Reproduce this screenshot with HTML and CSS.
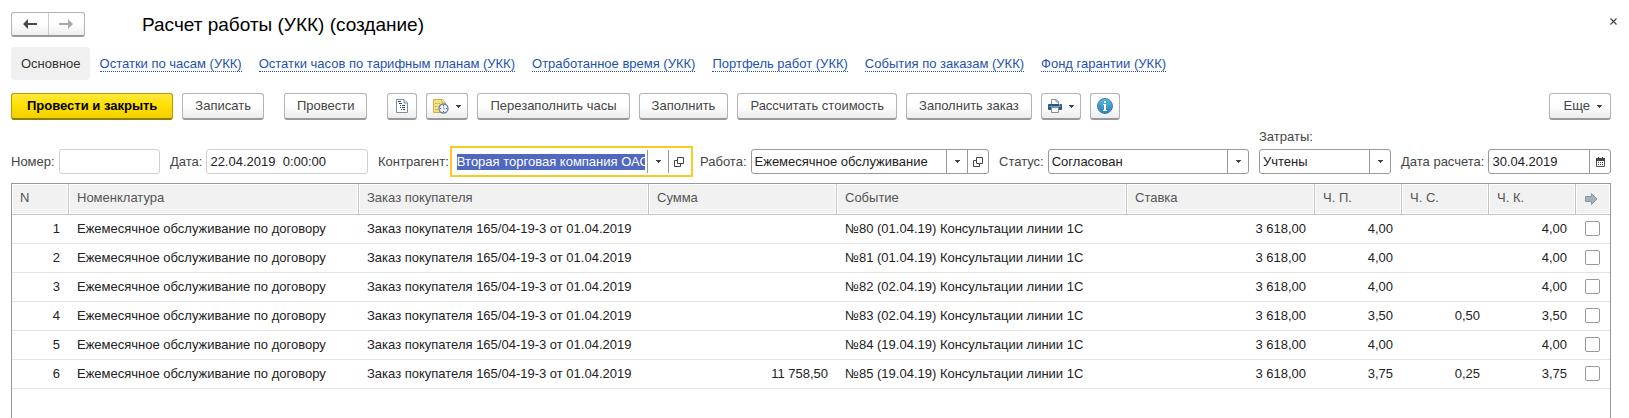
FILE: index.html
```html
<!DOCTYPE html>
<html lang="ru">
<head>
<meta charset="utf-8">
<title>Расчет работы (УКК) (создание)</title>
<link rel="stylesheet" href="styles.css">
</head>
<body>
<svg width="0" height="0" class="sprite" aria-hidden="true">
  <symbol id="caret" viewBox="0 0 5 3"><path d="M0 0h5v1h-1v1h-1v1h-1v-1h-1v-1h-1z" fill="#444"/></symbol>
  <symbol id="open" viewBox="0 0 10 10"><path d="M3.500.500h6v6h-6zM3 3.500H.500v6h6V7" fill="none" stroke="#444"/></symbol>
</svg>
<main class="page">
  <header class="titlebar">
    <div class="history">
      <button type="button" aria-label="Назад"><svg width="14" height="10" viewBox="0 0 14 10"><path d="M0 5L5 0v4h9v2H5v4z" fill="#4a4a4a"/></svg></button>
      <button type="button" aria-label="Вперед"><svg width="14" height="10" viewBox="0 0 14 10"><path d="M14 5L9 0v4H0v2h9v4z" fill="#aaa"/></svg></button>
    </div>
    <h1>Расчет работы (УКК) (создание)</h1>
    <button type="button" class="close" aria-label="Закрыть"><svg width="7" height="7" viewBox="0 0 7 7"><path d="M.500.500l6 6m0-6l-6 6" stroke="#444" stroke-width="1.200"/></svg></button>
  </header>
  <nav class="tabs">
    <span class="current">Основное</span>
    <a href="#">Остатки по часам (УКК)</a>
    <a href="#">Остатки часов по тарифным планам (УКК)</a>
    <a href="#">Отработанное время (УКК)</a>
    <a href="#">Портфель работ (УКК)</a>
    <a href="#">События по заказам (УКК)</a>
    <a href="#">Фонд гарантии (УКК)</a>
  </nav>
  <div class="toolbar">
    <button type="button" class="btn primary">Провести и закрыть</button>
    <button type="button" class="btn">Записать</button>
    <button type="button" class="btn spaced">Провести</button>
    <button type="button" class="btn icon spaced" aria-label="Структура">
      <svg width="12" height="14" viewBox="0 0 12 14"><path d="M.500.500h7.500l3.500 3.500v9.500h-11z" fill="#fff" stroke="#7790a8"/><path d="M8 .500v3.500h3.500" fill="#dce5ee" stroke="#7790a8"/><path d="M2 2.500h3M3 4.500h3M4 6.500h1m1 0h3M4 8.500h1m1 0h3M5 10.500h1m1 0h2" stroke="#33465c"/></svg>
    </button>
    <button type="button" class="btn icon" aria-label="Отчеты">
      <svg width="16" height="16" viewBox="0 0 16 16"><path d="M.500 1.500h9l3 3v10h-12z" fill="#f7df86" stroke="#d3ad48"/><path d="M9 1.500v3.500h3.500" fill="#fff3bd" stroke="#d3ad48"/><path d="M2 5.500h2m1 0h2M2 8.500h2m1 0h1M2 11.500h3" stroke="#d3ad48"/><circle cx="10.500" cy="10.500" r="4.500" fill="#eef5fb" stroke="#5b86ae" stroke-width="1.300"/><path d="M10.500 7v1M10.500 13v1M7 10.500h1M13 10.500h1" stroke="#d33"/><path d="M10.500 8.500v2.500h2" fill="none" stroke="#9db5cc"/></svg>
      <svg class="caret" width="5" height="3"><use href="#caret"/></svg>
    </button>
    <button type="button" class="btn">Перезаполнить часы</button>
    <button type="button" class="btn">Заполнить</button>
    <button type="button" class="btn">Рассчитать стоимость</button>
    <button type="button" class="btn">Заполнить заказ</button>
    <button type="button" class="btn icon" aria-label="Печать">
      <svg width="14" height="14" viewBox="0 0 14 14"><path d="M3.500 5V.500h5l2 2V5" fill="#fff" stroke="#7891aa"/><path d="M8 .500V3h2.500" fill="none" stroke="#7891aa"/><rect y="5" width="14" height="6" rx="1" fill="#2d567d"/><path d="M1 7.500h12" stroke="#6f9ac0"/><path d="M11 6h1" stroke="#fff"/><path d="M3.500 8.500h7v5h-7z" fill="#fff" stroke="#7891aa"/></svg>
      <svg class="caret" width="5" height="3"><use href="#caret"/></svg>
    </button>
    <button type="button" class="btn icon" aria-label="Информация">
      <svg width="16" height="16" viewBox="0 0 16 16"><defs><linearGradient id="info" x2="0" y2="1"><stop stop-color="#5cb5df"/><stop offset="1" stop-color="#2d7fb4"/></linearGradient></defs><circle cx="8" cy="8" r="7.500" fill="url(#info)" stroke="#3f7fa8"/><path d="M7 3h2v2H7zM6 6h3v6h1v1H6v-1h1V7H6z" fill="#fff"/></svg>
    </button>
    <button type="button" class="btn more">Еще <svg class="caret" width="5" height="3"><use href="#caret"/></svg></button>
  </div>
  <form class="fields">
    <div class="field"><label for="number">Номер:</label><div class="box muted"><input id="number" type="text"></div></div>
    <div class="field"><label for="date">Дата:</label><div class="box muted"><input id="date" type="text" value="22.04.2019  0:00:00"></div></div>
    <div class="field"><label for="partner">Контрагент:</label><div class="box active"><input id="partner" type="text" value="Вторая торговая компания ОАО"><button type="button" aria-label="Выбрать контрагента"><svg width="5" height="3"><use href="#caret"/></svg></button><button type="button" aria-label="Открыть контрагента"><svg width="10" height="10"><use href="#open"/></svg></button></div></div>
    <div class="field"><label for="work">Работа:</label><div class="box"><input id="work" type="text" value="Ежемесячное обслуживание"><button type="button" aria-label="Выбрать работу"><svg width="5" height="3"><use href="#caret"/></svg></button><button type="button" aria-label="Открыть работу"><svg width="10" height="10"><use href="#open"/></svg></button></div></div>
    <div class="field"><label for="status">Статус:</label><div class="box"><select id="status"><option>Согласован</option></select><span class="arrow"><svg width="5" height="3"><use href="#caret"/></svg></span></div></div>
    <div class="field stacked"><label for="costs">Затраты:</label><div class="box"><select id="costs"><option>Учтены</option></select><span class="arrow"><svg width="5" height="3"><use href="#caret"/></svg></span></div></div>
    <div class="field"><label for="calc">Дата расчета:</label><div class="box"><input id="calc" type="text" value="30.04.2019"><button type="button" aria-label="Календарь"><svg width="9" height="10" viewBox="0 0 9 10"><path d="M.500 2v7.500h8V2" fill="#fff" stroke="#555"/><path d="M0 1h9v3H0zM2 0h1v1H2zM6 0h1v1H6z" fill="#444"/><path d="M2 5.500h5M2 7.500h5" stroke="#444" stroke-dasharray="1 1"/></svg></button></div></div>
  </form>
  <div class="grid">
    <table>
      <colgroup><col class="c-n"><col class="c-wide"><col class="c-wide"><col class="c-mid"><col class="c-wide"><col class="c-mid"><col class="c-hours"><col class="c-hours"><col class="c-hours"><col class="c-flag"></colgroup>
      <thead><tr><th>N</th><th>Номенклатура</th><th>Заказ покупателя</th><th>Сумма</th><th>Событие</th><th>Ставка</th><th>Ч. П.</th><th>Ч. С.</th><th>Ч. К.</th><th class="flag" aria-label="Перенос"><svg width="13" height="12" viewBox="0 0 13 12"><path d="M.500 3.500h6v-3l5.500 5.500-5.500 5.500v-3h-6z" fill="#a3b1bb" stroke="#8796a2"/></svg></th></tr></thead>
      <tbody>
        <tr><td class="num">1</td><td>Ежемесячное обслуживание по договору</td><td>Заказ покупателя 165/04-19-3 от 01.04.2019</td><td class="num"></td><td>№80 (01.04.19) Консультации линии 1С</td><td class="num">3 618,00</td><td class="num">4,00</td><td class="num"></td><td class="num">4,00</td><td class="flag"><input type="checkbox" aria-label="Строка 1"></td></tr>
        <tr><td class="num">2</td><td>Ежемесячное обслуживание по договору</td><td>Заказ покупателя 165/04-19-3 от 01.04.2019</td><td class="num"></td><td>№81 (01.04.19) Консультации линии 1С</td><td class="num">3 618,00</td><td class="num">4,00</td><td class="num"></td><td class="num">4,00</td><td class="flag"><input type="checkbox" aria-label="Строка 2"></td></tr>
        <tr><td class="num">3</td><td>Ежемесячное обслуживание по договору</td><td>Заказ покупателя 165/04-19-3 от 01.04.2019</td><td class="num"></td><td>№82 (02.04.19) Консультации линии 1С</td><td class="num">3 618,00</td><td class="num">4,00</td><td class="num"></td><td class="num">4,00</td><td class="flag"><input type="checkbox" aria-label="Строка 3"></td></tr>
        <tr><td class="num">4</td><td>Ежемесячное обслуживание по договору</td><td>Заказ покупателя 165/04-19-3 от 01.04.2019</td><td class="num"></td><td>№83 (02.04.19) Консультации линии 1С</td><td class="num">3 618,00</td><td class="num">3,50</td><td class="num">0,50</td><td class="num">3,50</td><td class="flag"><input type="checkbox" aria-label="Строка 4"></td></tr>
        <tr><td class="num">5</td><td>Ежемесячное обслуживание по договору</td><td>Заказ покупателя 165/04-19-3 от 01.04.2019</td><td class="num"></td><td>№84 (19.04.19) Консультации линии 1С</td><td class="num">3 618,00</td><td class="num">4,00</td><td class="num"></td><td class="num">4,00</td><td class="flag"><input type="checkbox" aria-label="Строка 5"></td></tr>
        <tr><td class="num">6</td><td>Ежемесячное обслуживание по договору</td><td>Заказ покупателя 165/04-19-3 от 01.04.2019</td><td class="num">11 758,50</td><td>№85 (19.04.19) Консультации линии 1С</td><td class="num">3 618,00</td><td class="num">3,75</td><td class="num">0,25</td><td class="num">3,75</td><td class="flag"><input type="checkbox" aria-label="Строка 6"></td></tr>
      </tbody>
    </table>
  </div>
</main>
<script src="script.js"></script>
</body>
</html>
```
FILE: styles.css
```css
* { box-sizing: border-box; }
body { margin: 0; background: #fff; color: #333; font: 13px/16px "Liberation Sans", Arial, sans-serif; }
button, input, select { font: inherit; color: inherit; margin: 0; }
svg { display: block; flex: none; }
.sprite { position: absolute; }
.page { min-height: 100vh; padding: 12px 18px 0 11px; display: flex; flex-direction: column; }

.titlebar { display: flex; align-items: center; height: 25px; }
.history { display: flex; border: 1px solid #b3b3b3; border-bottom: 2px solid #999; border-radius: 3px; height: 25px; width: 74px; background: linear-gradient(#fff 50%, #eee); }
.history button { flex: 1; border: 0; padding: 0; background: none; display: flex; align-items: center; justify-content: center; }
.history button + button { border-left: 1px solid #ccc; }
h1 { margin: 0 0 0 57px; font-size: 19px; line-height: 24px; font-weight: 400; color: #000; }
.close { margin-left: auto; margin-right: -6px; align-self: flex-start; border: 0; padding: 6px 0; background: none; }

.tabs { display: flex; align-items: center; gap: 17px; margin-top: 10px; height: 33px; }
.current { padding: 0 9px 0 10px; margin-right: -7px; line-height: 33px; background: #f0f0f0; border-radius: 4px; }
.tabs a { color: #1d52b3; text-decoration: none; line-height: 15px; padding-top: 1px; border-bottom: 1px dotted #1d52b3; }

.toolbar { display: flex; gap: 9px; margin-top: 13px; }
.btn { height: 27px; padding: 0 12px; border: 1px solid #b3b3b3; border-bottom: 2px solid #999; border-radius: 3px; background: linear-gradient(#fff 50%, #ececec); color: #444; display: flex; align-items: center; justify-content: center; gap: 7px; white-space: nowrap; }
.primary { padding: 0 15px; background: linear-gradient(#ffe83b, #ffdf00 50%, #f2cf00); border-color: #b39b00; border-bottom-color: #8f7c00; color: #000; font-weight: 700; }
.spaced { margin-left: 11px; }
.icon { padding: 0 6px; min-width: 30px; }
.more { margin-left: auto; padding: 0 8px 0 14px; }

.fields { display: grid; grid-template-columns: 149fr 198fr 312fr 289fr 250fr 132fr 210fr; gap: 10px; align-items: end; margin-top: 9px; }
.field { display: flex; align-items: center; gap: 4px; min-width: 0; color: #444; white-space: nowrap; }
.stacked { flex-direction: column; align-items: stretch; }
.box { display: flex; flex: 1; min-width: 0; height: 25px; border: 1px solid #999; border-radius: 3px; background: #fff; color: #222; }
.stacked .box { flex: none; }
.muted { border-color: #d0d0d0; }
.active { border-color: transparent; border-radius: 0; outline: 2px solid #f9ca24; outline-offset: 1px; }
.box input, .box select { flex: 1; width: 0; min-width: 0; border: 0; outline: 0; padding: 0 3px; background: none; appearance: none; white-space: pre; }
.active input { padding: 0; margin: 3px 2px 3px 3px; }
.box input::selection { background: #5068c0; color: #fff; }
.box button, .arrow { width: 21px; flex: none; border: 0; border-left: 1px solid #999; padding: 0; background: none; display: flex; align-items: center; justify-content: center; }

.grid { flex: 1; margin-top: 9px; border: 1px solid #999; border-bottom: 0; }
table { width: 100%; table-layout: fixed; border-collapse: separate; border-spacing: 0; }
.c-n { width: 57px; }
.c-wide { width: 290px; }
.c-mid { width: 188px; }
.c-hours { width: 87px; }
th { height: 31px; padding: 0 8px 2px; text-align: left; font-weight: 400; color: #555; background: #f1f1f1; border-right: 1px solid #c4c4c4; border-bottom: 1px solid #c4c4c4; box-shadow: inset 0 0 0 1px #fff; }
td { height: 29px; padding: 0 8px; border-bottom: 1px solid #e3e3e3; white-space: nowrap; overflow: hidden; color: #222; }
th:last-child { border-right: 0; }
.num { padding-right: 9px; text-align: right; }
.flag { padding: 0 9px; }
td.flag { padding-bottom: 2px; }
.flag input { display: block; appearance: none; width: 15px; height: 15px; border: 1px solid #999; border-radius: 2px; background: #fff; }
```
FILE: script.js
```js
const partner = document.getElementById("partner");
partner.focus();
partner.select();
```
